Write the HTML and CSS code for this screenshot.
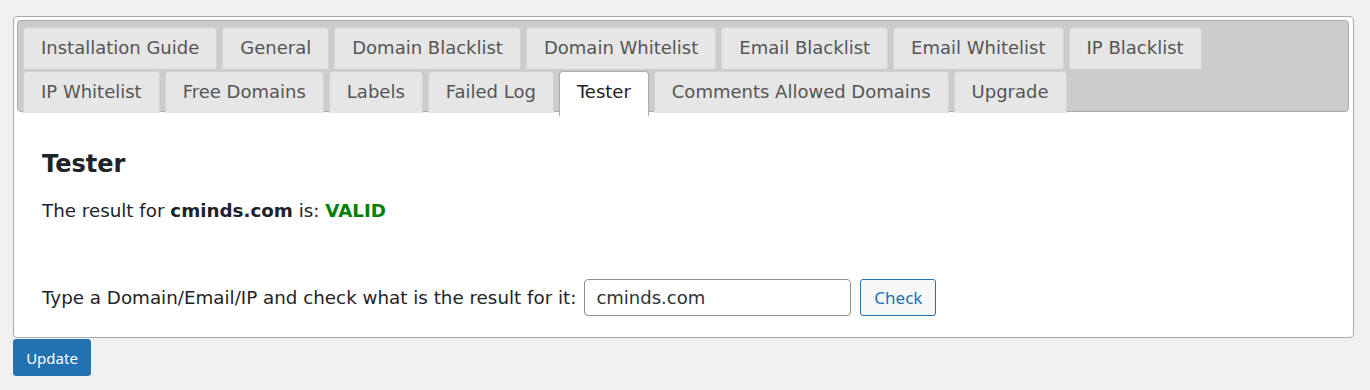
FILE: index.html
```html
<!DOCTYPE html>
<html>
<head>
  <meta charset="utf-8">
  <title>Tester</title>
  <link rel="stylesheet" href="styles.css">
</head>
<body>
    <div class="wrap">
        <div class="tabs">
            <div class="tab_nav">
                <a class="tab">Installation Guide</a>
                <a class="tab">General</a>
                <a class="tab">Domain Blacklist</a>
                <a class="tab">Domain Whitelist</a>
                <a class="tab">Email Blacklist</a>
                <a class="tab">Email Whitelist</a>
                <a class="tab">IP Blacklist</a>
                <span class="row_break"></span>
                <a class="tab">IP Whitelist</a>
                <a class="tab">Free Domains</a>
                <a class="tab">Labels</a>
                <a class="tab">Failed Log</a>
                <a class="tab active">Tester</a>
                <a class="tab">Comments Allowed Domains</a>
                <a class="tab">Upgrade</a>
            </div>
            <div class="panel">
                <h2>Tester</h2>
                <p class="result">The result for <b>cminds.com</b> is: <b class="valid">VALID</b></p>
                <form class="check_form">
                    <label for="check_value">Type a Domain/Email/IP and check what is the result for it:</label>
                    <input type="text" id="check_value" value="cminds.com">
                    <input type="button" class="button check" value="Check">
                </form>
            </div>
        </div>
        <input type="button" class="button primary" value="Update">
    </div>
</body>
</html>
```

FILE: styles.css
```css
body{
    margin: 0;
    background-color: #f0f0f0;
    font-family: "DejaVu Sans", Verdana, sans-serif;
    color: #1d2327;
}

.wrap{
    padding: 16px 16px 0 13px;
}

.tabs{
    background-color: #fff;
    border: 1px solid #aaa;
    border-radius: 4px;
    padding: 3px 4px 0 3px;
}

.tab_nav{
    display: flex;
    flex-wrap: wrap;
    row-gap: 1px;
    background-color: #ccc;
    border: 1px solid #aaa;
    border-radius: 4px;
    padding: 6px 5px 0 5px;
    height: 84px;
    align-content: flex-start;
}

.row_break{
    flex-basis: 100%;
    height: 0;
}

.tab{
    display: block;
    height: 41px;
    line-height: 40px;
    padding: 0 17px;
    margin-right: 5px;
    background-color: #e6e6e6;
    border: 1px solid #d3d3d3;
    border-bottom: 0;
    border-radius: 4px 4px 0 0;
    color: #555;
    font-size: 18px;
    white-space: nowrap;
    cursor: pointer;
}

.tab.active{
    background-color: #fff;
    border-color: #aaa;
    color: #212121;
    height: 44px;
    margin-bottom: -2px;
    position: relative;
}

.panel{
    box-sizing: border-box;
    height: 225px;
    padding: 38px 25px 0 25px;
}

h2{
    margin: 0;
    font-size: 24px;
    line-height: 28px;
    font-weight: bold;
}

.result{
    margin: 22px 0 0 0;
    font-size: 18.3px;
    line-height: 22px;
}

.valid{
    color: #008000;
}

.check_form{
    margin-top: 57px;
    display: flex;
    align-items: center;
    font-size: 18.3px;
    line-height: 22px;
}

.check_form label{
    margin-right: 8px;
}

#check_value{
    width: 267px;
    height: 37px;
    box-sizing: border-box;
    border: 1px solid #8c8f94;
    border-radius: 4px;
    padding: 0 11px;
    font-family: "DejaVu Sans", Verdana, sans-serif;
    font-size: 18px;
    color: #2c3338;
    margin-right: 9px;
}

.button{
    height: 37px;
    box-sizing: border-box;
    padding: 0 12px;
    border: 1px solid #2271b1;
    border-radius: 3px;
    background-color: #f6f7f7;
    color: #2271b1;
    font-family: "Noto Sans", "Open Sans", sans-serif;
    font-size: 15px;
    cursor: pointer;
}

.button.check{
    font-size: 17px;
    width: 76px;
}

.button.primary{
    margin-top: 1px;
    background-color: #2271b1;
    color: #fff;
    width: 78px;
}
```
